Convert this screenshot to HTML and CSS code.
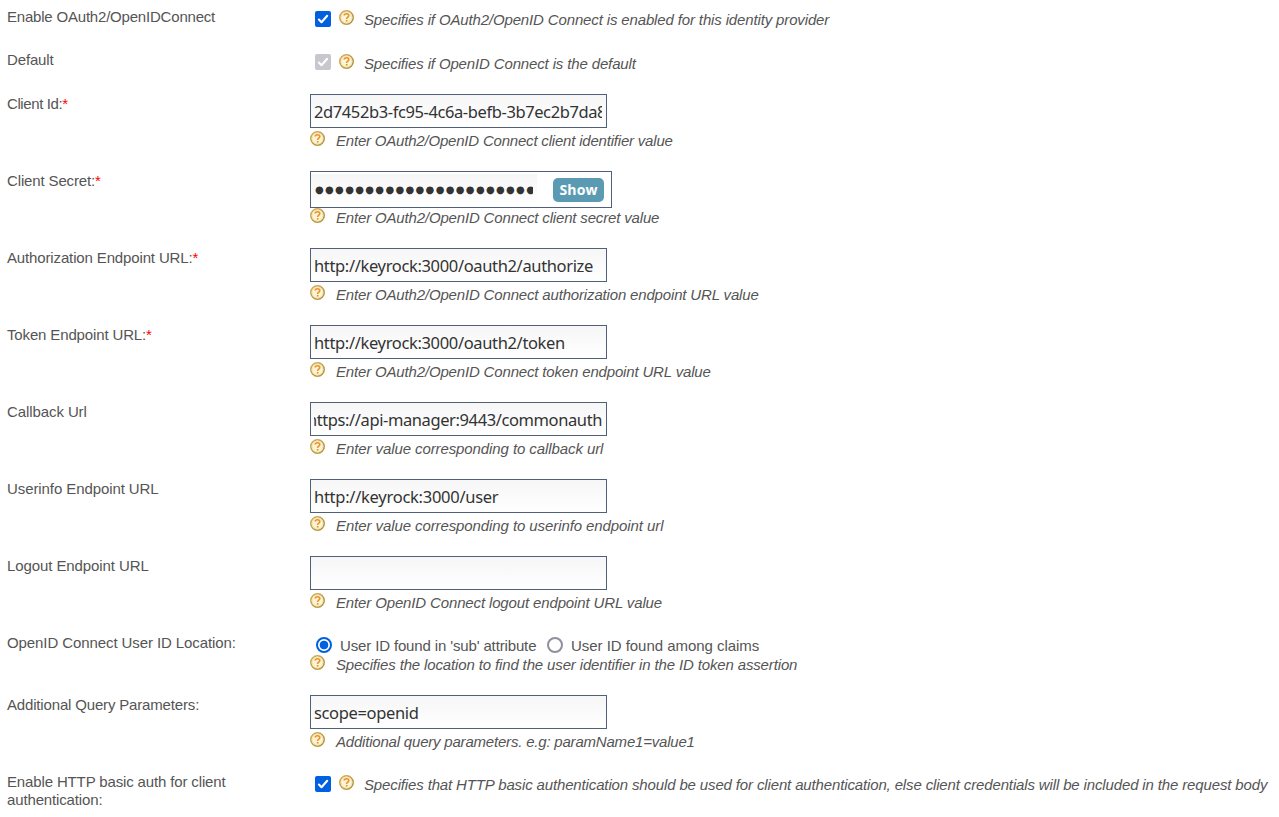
FILE: index.html
```
<!DOCTYPE html>
<html lang="en">
<head>
<meta charset="utf-8">
<title>OAuth2/OpenID Connect Configuration</title>
<link rel="stylesheet" href="styles.css">
</head>
<body>
<svg class="defs" aria-hidden="true">
  <linearGradient id="gold" x1="0" y1="0" x2="1" y2="1"><stop offset="0" stop-color="#d4b060"/><stop offset="1" stop-color="#b09038"/></linearGradient>
  <symbol id="help" viewBox="0 0 15 15">
    <circle cx="7.5" cy="7.5" r="6.7" fill="#fcf5d6" stroke="url(#gold)" stroke-width="1.6"/>
    <circle cx="7.5" cy="7.5" r="5.4" fill="none" stroke="#f3e2ac" stroke-width="1"/>
    <path d="M5.2 5.6C5.2 3.1 9.8 3.1 9.8 5.6C9.8 7.2 7.6 7.2 7.6 9" fill="none" stroke="#ed8f2e" stroke-width="1.6"/>
    <path d="M6.8 10h1.7v1.6H6.8z" fill="#ed8f2e"/>
  </symbol>
  <symbol id="check" viewBox="0 0 16 16"><path d="M3.9 8.6l2.6 2.6 5.7-6.4" fill="none" stroke="#fff" stroke-width="2.1" stroke-linecap="round" stroke-linejoin="round"/></symbol>
</svg>
<form class="form">
  <div class="row row-first">
    <label class="label tight">Enable OAuth2/OpenIDConnect</label>
    <div class="inline"><span class="checkbox"><svg><use href="#check"/></svg></span><svg class="help"><use href="#help"/></svg><em>Specifies if OAuth2/OpenID Connect is enabled for this identity provider</em></div>
  </div>
  <div class="row row-check row-default">
    <label class="label">Default</label>
    <div class="inline"><span class="checkbox disabled"><svg><use href="#check"/></svg></span><svg class="help"><use href="#help"/></svg><em>Specifies if OpenID Connect is the default</em></div>
  </div>
  <div class="row">
    <label class="label tighter">Client Id:<b>*</b></label>
    <div class="field"><div class="input compact"><span>2d7452b3-fc95-4c6a-befb-3b7ec2b7da8e</span></div>
    <div class="hint"><svg class="help"><use href="#help"/></svg><em class="tight">Enter OAuth2/OpenID Connect client identifier value</em></div></div>
  </div>
  <div class="row">
    <label class="label">Client Secret:<b>*</b></label>
    <div class="field"><div class="secret"><div class="dots"><span>●●●●●●●●●●●●●●●●●●●●●●</span></div><button type="button" class="show">Show</button></div>
    <div class="hint"><svg class="help"><use href="#help"/></svg><em class="snug">Enter OAuth2/OpenID Connect client secret value</em></div></div>
  </div>
  <div class="row">
    <label class="label">Authorization Endpoint URL:<b>*</b></label>
    <div class="field"><div class="input"><span>http://keyrock:3000/oauth2/authorize</span></div>
    <div class="hint"><svg class="help"><use href="#help"/></svg><em class="snug">Enter OAuth2/OpenID Connect authorization endpoint URL value</em></div></div>
  </div>
  <div class="row">
    <label class="label">Token Endpoint URL:<b>*</b></label>
    <div class="field"><div class="input"><span>http://keyrock:3000/oauth2/token</span></div>
    <div class="hint"><svg class="help"><use href="#help"/></svg><em class="snug">Enter OAuth2/OpenID Connect token endpoint URL value</em></div></div>
  </div>
  <div class="row">
    <label class="label loose">Callback Url</label>
    <div class="field"><div class="input compact scrolled"><span>https://api-manager:9443/commonauth</span></div>
    <div class="hint"><svg class="help"><use href="#help"/></svg><em class="loose">Enter value corresponding to callback url</em></div></div>
  </div>
  <div class="row">
    <label class="label loose">Userinfo Endpoint URL</label>
    <div class="field"><div class="input roomy"><span>http://keyrock:3000/user</span></div>
    <div class="hint"><svg class="help"><use href="#help"/></svg><em class="loose">Enter value corresponding to userinfo endpoint url</em></div></div>
  </div>
  <div class="row">
    <label class="label loose">Logout Endpoint URL</label>
    <div class="field"><div class="input"></div>
    <div class="hint"><svg class="help"><use href="#help"/></svg><em>Enter OpenID Connect logout endpoint URL value</em></div></div>
  </div>
  <div class="row row-radio">
    <label class="label loose">OpenID Connect User ID Location:</label>
    <div class="field"><div class="radios"><i class="radio on"></i><span class="first">User ID found in 'sub' attribute</span><i class="radio"></i><span class="wide">User ID found among claims</span></div>
    <div class="hint"><svg class="help"><use href="#help"/></svg><em>Specifies the location to find the user identifier in the ID token assertion</em></div></div>
  </div>
  <div class="row">
    <label class="label snug">Additional Query Parameters:</label>
    <div class="field"><div class="input"><span>scope=openid</span></div>
    <div class="hint"><svg class="help"><use href="#help"/></svg><em class="tight">Additional query parameters. e.g: paramName1=value1</em></div></div>
  </div>
  <div class="row row-check">
    <label class="label">Enable HTTP basic auth for client authentication:</label>
    <div class="inline"><span class="checkbox"><svg><use href="#check"/></svg></span><svg class="help"><use href="#help"/></svg><em>Specifies that HTTP basic authentication should be used for client authentication, else client credentials will be included in the request body</em></div>
  </div>
</form>
</body>
</html>
```
FILE: styles.css
```
* { box-sizing: border-box; }
body { margin: 0; background: #fff; color: #555; font: 15px/18px "Liberation Sans", Arial, sans-serif; letter-spacing: -0.14px; overflow: hidden; }
.defs { display: block; width: 0; height: 0; }
.form { padding-top: 7px; }
.row { display: grid; grid-template-columns: 310px 1fr; height: 77px; }
.row-first { height: 43px; }
.row-check { height: 44px; }
.row-radio { height: 62px; }
.label { padding: 1px 60px 0 7px; }
.label b { color: #f00; font-weight: 400; }
.loose { letter-spacing: -0.09px; }
.snug { letter-spacing: -0.165px; }
.tight { letter-spacing: -0.2px; }
.tighter { letter-spacing: -0.4px; }
.wide { letter-spacing: -0.04px; }
em { white-space: nowrap; font-style: italic; }
.help { width: 15px; height: 15px; flex: none; display: block; }
.inline { display: flex; align-items: flex-start; padding: 4px 0 0 5px; }
.inline .help { margin: -1px 10px 0 8px; }
.row-default .help { margin-top: 0; }
.row-default em { padding-top: 1px; }
.checkbox { width: 16px; height: 16px; border-radius: 2px; background: #0060df; flex: none; }
.checkbox.disabled { background: #c7c7cd; }
.checkbox svg { display: block; width: 16px; height: 16px; }
.hint { display: flex; height: 18px; }
.hint .help { margin-right: 11px; }
.hint em { padding-top: 1px; }
.field { display: flex; flex-direction: column; }
.input { width: 297px; height: 34px; margin-bottom: 3px; padding: 1px 4px 0 3px; border: 1px solid #4f6078; background: linear-gradient(#f6f6f6, #fff); color: #333; font: 16.5px/32px "Noto Sans", sans-serif; letter-spacing: -0.35px; }
.input.compact { letter-spacing: -0.4px; }
.input.roomy { letter-spacing: -0.27px; }
.input span { display: block; overflow: hidden; white-space: nowrap; height: 31px; }
.input.scrolled span { direction: rtl; }
.secret { display: flex; align-items: center; width: 302px; height: 37px; border: 1px solid #4f6078; }
.dots { width: 226px; height: 31px; margin-right: 16px; padding: 0 4px; background: linear-gradient(#f6f6f6, #fff); color: #333; font: 10px/32px "DejaVu Sans", sans-serif; }
.dots span { display: block; overflow: hidden; white-space: nowrap; letter-spacing: 1.33px; }
.show { width: 51px; height: 24px; padding: 0; border: 0; border-radius: 5px; background: #5a9bb3; color: #fff; font: 700 14px/23px "Open Sans", sans-serif; letter-spacing: 0.1px; }
.radios { display: flex; align-items: center; height: 22px; padding: 2px 0 0 6px; white-space: nowrap; }
.radios span { padding-top: 2px; }
.radio { width: 16px; height: 16px; margin-right: 8px; border: 2px solid #8f8f9d; border-radius: 50%; flex: none; }
.radio.on { border-color: #0060df; background: radial-gradient(circle, #0060df 4px, #fff 4.7px); }
.radios .first { width: 207px; }
```
